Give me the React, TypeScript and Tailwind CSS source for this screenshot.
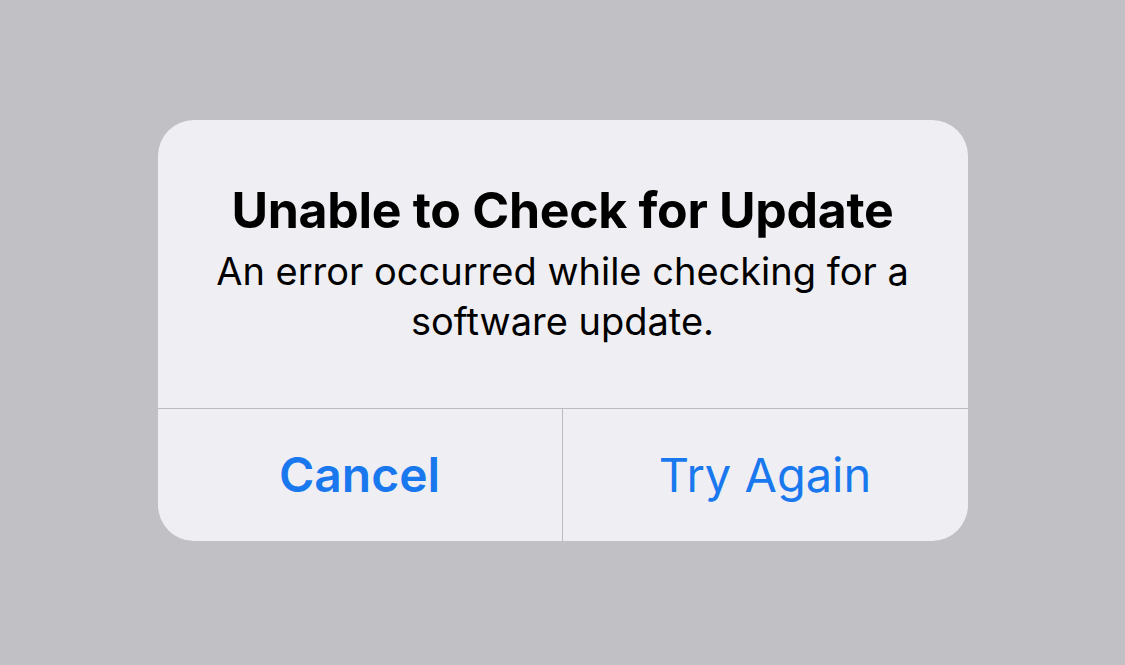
export default function App() {
  return (
    <div
      className="flex h-[665px] w-full items-center justify-center bg-[#c1c0c5]"
      style={{ fontFamily: "Inter, 'Liberation Sans', sans-serif" }}
    >
      <div className="mt-[-4px] w-[810px] overflow-hidden rounded-[36px] bg-[#efeff3]">
        <div className="flex h-[288px] flex-col items-center px-[30px] pt-[62px] text-center text-black">
          <h1 className="text-[50px] font-bold leading-[56px] tracking-[-0.3px]">
            Unable to Check for Update
          </h1>
          <p className="mt-[8px] text-[38px] leading-[50px]">
            An error occurred while checking for a
            <br />
            software update.
          </p>
        </div>
        <div className="h-px bg-[#bcbcc0]" />
        <div className="grid h-[132px] grid-cols-2">
          <button className="flex items-center justify-center border-r border-[#bcbcc0] text-[48px] font-semibold text-[#1a78ef]">
            Cancel
          </button>
          <button className="flex items-center justify-center text-[47px] text-[#1a78ef]">
            Try Again
          </button>
        </div>
      </div>
    </div>
  );
}
